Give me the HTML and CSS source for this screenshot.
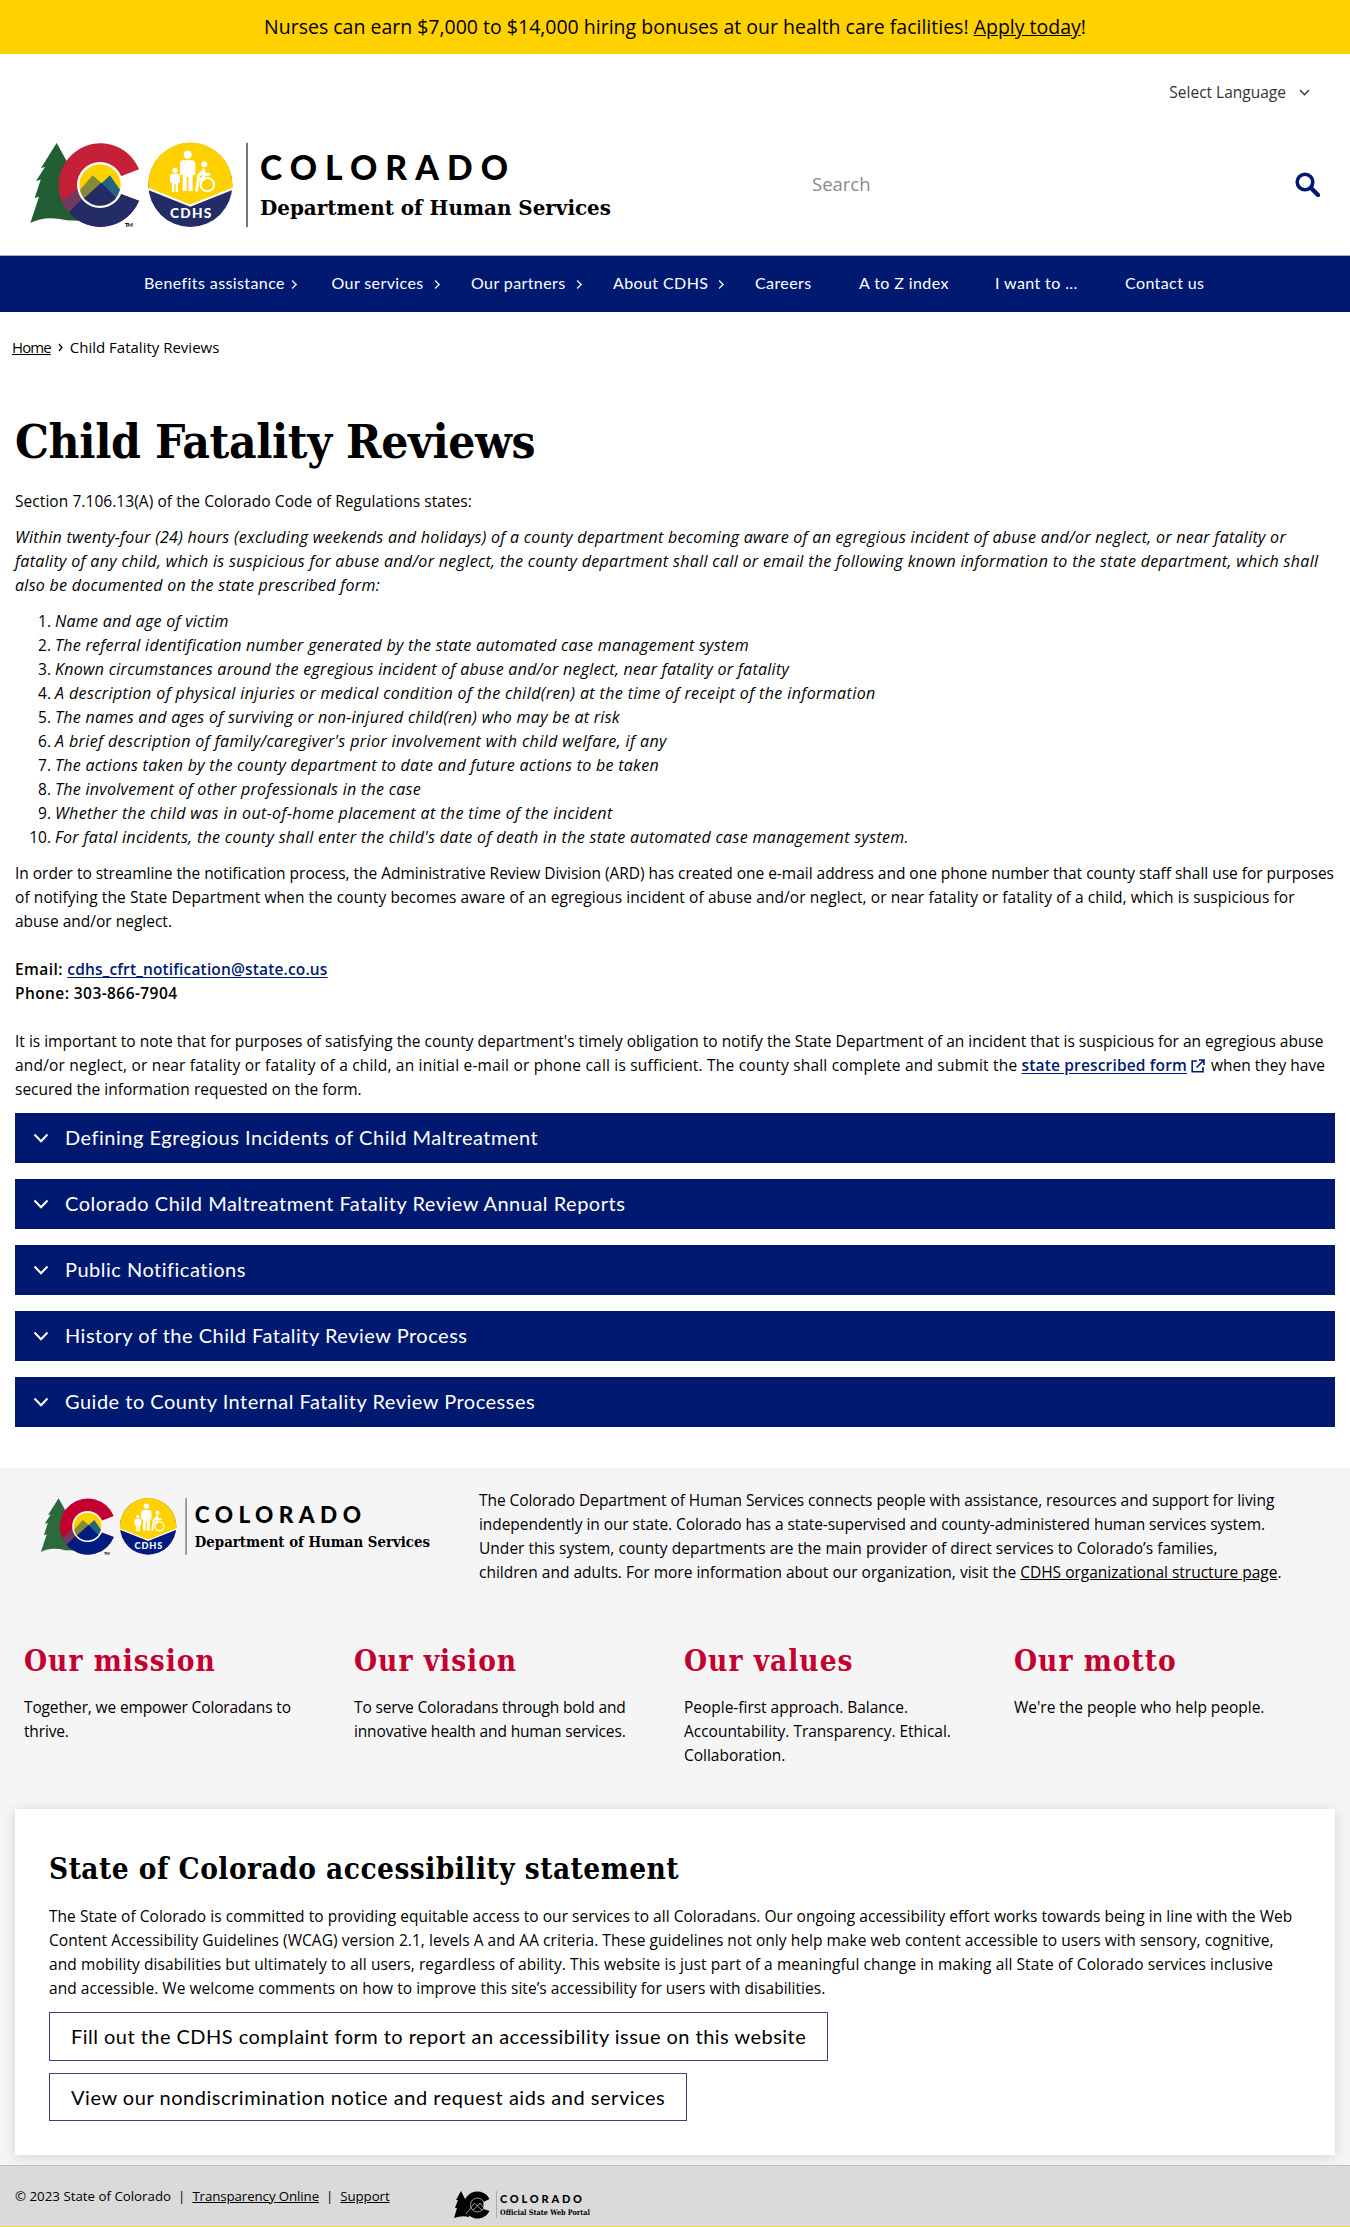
FILE: index.html
```html
<!DOCTYPE html>
<html lang="en">
<head>
<meta charset="utf-8">
<title>Child Fatality Reviews | Colorado Department of Human Services</title>
<link rel="stylesheet" href="styles.css">
</head>
<body>
<svg class="defs" aria-hidden="true">
  <symbol id="cdhs-logo" viewBox="0 0 1770 300">
    <path class="green" d="M95 24L48 99L60 96L33 138L47 134L29 189L42 185L16 264Q60 240 125 256L175 258L150 90L128 83Z"/>
    <path class="red" d="M342 103A125 125 0 1 0 342 197L288 177A66 66 0 1 1 288 124Z"/>
    <path class="navy" d="M342 197A125 125 0 0 1 131 232L180 180L190 200A66 66 0 0 0 288 177Z"/>
    <path class="plum" d="M110 200L162 160L182 181L131 232Q117 218 110 200Z"/>
    <circle cx="225" cy="150" r="69" fill="#fff"/>
    <circle class="yellow" cx="225" cy="150" r="62"/>
    <path class="olive" d="M165 164L203 121L232 146L182 196Q168 182 165 164Z"/>
    <path class="teal" d="M285 164L255 121L228 146L268 194Q280 182 285 164Z"/>
    <path class="navy" d="M177 190L229 143L274 188A62 62 0 0 1 177 190Z"/>
    <text x="299" y="276" class="sans" font-size="18" font-weight="700" textLength="25">TM</text>
    <circle class="navy" cx="496" cy="150" r="126"/>
    <path class="yellow" d="M370.5 160A126 126 0 1 1 621.5 160L496 213Z"/>
    <path d="M371 162L496 212L621 162" fill="none" stroke="#fff" stroke-width="6"/>
    <g fill="#fff" stroke="#fff" stroke-linecap="round">
      <circle cx="488" cy="59" r="12" stroke="none"/>
      <path d="M473 76H502Q511 77 511 88V119H503V168H490V126H485V168H473V119H465V88Q465 77 473 76Z" stroke="none"/>
      <circle cx="450" cy="106" r="8" stroke="none"/>
      <path d="M440 116H460Q466 118 465 126V143H459V171H452V147H448V171H441V143H435V126Q434 118 440 116Z" stroke="none"/>
      <circle cx="538" cy="88" r="9" stroke="none"/>
      <circle cx="547" cy="149" r="20" fill="none" stroke-width="6"/>
      <path d="M536 104V132H520L515 166M536 118H552M536 106L520 124" fill="none" stroke-width="9"/>
    </g>
    <text x="435" y="249" class="sans" font-size="41" font-weight="900" textLength="124" fill="#fff">CDHS</text>
    <path d="M666 23V277" stroke="#333" stroke-width="4"/>
    <text x="705" y="135" class="sans" font-size="101" font-weight="900" textLength="744">COLORADO</text>
    <text x="705" y="241" class="slab" font-size="63" font-weight="700" textLength="1053" lengthAdjust="spacingAndGlyphs">Department of Human Services</text>
  </symbol>
  <symbol id="chevron" viewBox="0 0 16 16"><path d="M1.5 4.5L8 11.2L14.5 4.5" fill="none" stroke="currentColor" stroke-width="2"/></symbol>
</svg>

<div class="alert">Nurses can earn $7,000 to $14,000 hiring bonuses at our health care facilities! <a href="#">Apply today</a>!</div>

<header class="masthead">
  <div class="language">Select Language <svg width="11" height="11"><use href="#chevron"/></svg></div>
  <div class="brand-row">
    <svg class="logo logo-header" width="590" height="100"><use href="#cdhs-logo"/></svg>
    <div class="search">
      <span>Search</span>
      <svg width="25" height="25" viewBox="0 0 25 25"><circle cx="10" cy="10" r="7.8" fill="none" stroke="#001970" stroke-width="3.6"/><path d="M16 16L23 23" stroke="#001970" stroke-width="4.4" stroke-linecap="round"/></svg>
    </div>
  </div>
</header>

<nav class="nav">
  <a class="sub" href="#">Benefits assistance</a>
  <a class="sub" href="#">Our services</a>
  <a class="sub" href="#">Our partners</a>
  <a class="sub" href="#">About CDHS</a>
  <a href="#">Careers</a>
  <a href="#">A to Z index</a>
  <a href="#">I want to ...</a>
  <a href="#">Contact us</a>
</nav>

<div class="breadcrumb"><a href="#">Home</a><svg width="7" height="9" viewBox="0 0 7 9"><path d="M2 1L5 4.5L2 8" fill="none" stroke="#000" stroke-width="1.3"/></svg><span>Child Fatality Reviews</span></div>

<main class="content">
  <h1>Child Fatality Reviews</h1>
  <p class="intro">Section 7.106.13(A) of the Colorado Code of Regulations states:</p>
  <p class="quote">Within twenty-four (24) hours (excluding weekends and holidays) of a county department becoming aware of an egregious incident of abuse and/or neglect, or near fatality or<br><span class="loose">fatality of any child, which is suspicious for abuse and/or neglect, the county department shall call or email the following known information to the state department, which shall</span><br>also be documented on the state prescribed form:</p>
  <ol class="quote-list">
    <li><em>Name and age of victim</em></li>
    <li><em>The referral identification number generated by the state automated case management system</em></li>
    <li><em>Known circumstances around the egregious incident of abuse and/or neglect, near fatality or fatality</em></li>
    <li><em class="looser">A description of physical injuries or medical condition of the child(ren) at the time of receipt of the information</em></li>
    <li><em>The names and ages of surviving or non-injured child(ren) who may be at risk</em></li>
    <li><em class="looser">A brief description of family/caregiver's prior involvement with child welfare, if any</em></li>
    <li><em>The actions taken by the county department to date and future actions to be taken</em></li>
    <li><em>The involvement of other professionals in the case</em></li>
    <li><em class="looser">Whether the child was in out-of-home placement at the time of the incident</em></li>
    <li><em class="loose">For fatal incidents, the county shall enter the child's date of death in the state automated case management system.</em></li>
  </ol>
  <p><span class="snug">In order to streamline the notification process, the Administrative Review Division (ARD) has created one e-mail address and one phone number that county staff shall use for purposes</span><br><span class="open">of notifying the State Department when the county becomes aware of an egregious incident of abuse and/or neglect, or near fatality or fatality of a child, which is suspicious for</span><br>abuse and/or neglect.<br><br><strong>Email: <a href="#">cdhs_cfrt_notification@state.co.us</a><br>Phone: 303-866-7904</strong><br><br>It is important to note that for purposes of satisfying the county department's timely obligation to notify the State Department of an incident that is suspicious for an egregious abuse<br><span class="wide">and/or neglect, or near fatality or fatality of a child, an initial e-mail or phone call is sufficient. The county shall complete and submit the </span><strong><a href="#">state prescribed form</a></strong><svg class="external" width="14" height="14" viewBox="0 0 14 14"><path d="M6 2H1.2V12.8H12V8M8 1H13V6M13 1L5.5 8.5" fill="none" stroke="#001970" stroke-width="1.6"/></svg> when they have<br>secured the information requested on the form.</p>
  <div class="accordion">
    <div class="panel"><svg width="16" height="16"><use href="#chevron"/></svg><span>Defining Egregious Incidents of Child Maltreatment</span></div>
    <div class="panel"><svg width="16" height="16"><use href="#chevron"/></svg><span>Colorado Child Maltreatment Fatality Review Annual Reports</span></div>
    <div class="panel"><svg width="16" height="16"><use href="#chevron"/></svg><span>Public Notifications</span></div>
    <div class="panel"><svg width="16" height="16"><use href="#chevron"/></svg><span>History of the Child Fatality Review Process</span></div>
    <div class="panel"><svg width="16" height="16"><use href="#chevron"/></svg><span>Guide to County Internal Fatality Review Processes</span></div>
  </div>
</main>

<section class="about">
  <div class="about-top">
    <svg class="logo logo-footer" width="396" height="67"><use href="#cdhs-logo"/></svg>
    <p>The Colorado Department of Human Services connects people with assistance, resources and support for living<br>independently in our state. Colorado has a state-supervised and county-administered human services system.<br><span class="loosest">Under this system, county departments are the main provider of direct services to Colorado’s families,</span><br><span class="level">children and adults. For more information about our organization, visit the <a href="#">CDHS organizational structure page</a>.</span></p>
  </div>
  <div class="values">
    <div><h2>Our mission</h2><p>Together, we empower Coloradans to<br>thrive.</p></div>
    <div><h2>Our vision</h2><p>To serve Coloradans through bold and<br>innovative health and human services.</p></div>
    <div><h2>Our values</h2><p class="level">People-first approach. Balance.<br>Accountability. Transparency. Ethical.<br>Collaboration.</p></div>
    <div><h2>Our motto</h2><p class="level">We're the people who help people.</p></div>
  </div>
  <div class="card">
    <h2>State of Colorado accessibility statement</h2>
    <p>The State of Colorado is committed to providing equitable access to our services to all Coloradans. Our ongoing accessibility effort works towards being in line with the Web<br>Content Accessibility Guidelines (WCAG) version 2.1, levels A and AA criteria. These guidelines not only help make web content accessible to users with sensory, cognitive,<br><span class="open">and mobility disabilities but ultimately to all users, regardless of ability. This website is just part of a meaningful change in making all State of Colorado services inclusive</span><br>and accessible. We welcome comments on how to improve this site’s accessibility for users with disabilities.</p>
    <a class="button" href="#">Fill out the CDHS complaint form to report an accessibility issue on this website</a>
    <a class="button notice" href="#">View our nondiscrimination notice and request aids and services</a>
  </div>
</section>

<footer class="bottom">
  <div class="legal"><span>© 2023 State of Colorado</span><span>|</span><a href="#">Transparency Online</a><span>|</span><a href="#">Support</a></div>
  <svg class="portal" width="140" height="30" viewBox="0 0 140 30">
    <path d="M7 1L2 10H4L1 18H3L0 28Q8 25 15 27V8L11 9Z"/>
    <path d="M35.5 9A13.5 13.5 0 1 0 35.5 21L29.5 19V12Z"/>
    <circle cx="23.5" cy="15" r="7" fill="none" stroke="#d9d9d9" stroke-width=".7"/>
    <path d="M12 24L20.5 13L23.5 16L26 13L30 18M19 20L23.5 16L28 20" fill="none" stroke="#d9d9d9" stroke-width=".7"/>
    <path d="M42.5 1V28" stroke="#999" stroke-width=".7"/>
    <text x="46" y="13" class="sans" font-size="11" font-weight="900" textLength="82">COLORADO</text>
    <text x="46" y="25" class="slab" font-size="7.5" font-weight="700" textLength="90" lengthAdjust="spacingAndGlyphs">Official State Web Portal</text>
  </svg>
</footer>
</body>
</html>
```
FILE: styles.css
```css
:root { --navy: #001970; }
* { box-sizing: border-box; }
body {
  margin: 0;
  background: #fff;
  color: #000;
  font: 15.5px/24px "Open Sans", sans-serif;
  white-space: nowrap;
}
a { color: inherit; text-underline-offset: 1px; }
p, h1, h2, ol { margin: 0; }
svg { display: block; flex: none; }
.defs { display: none; }

.sans { font-family: Lato, sans-serif; }
.slab { font-family: "DejaVu Serif", serif; font-stretch: condensed; }
.green { fill: var(--l-green); }
.red { fill: var(--l-red); }
.navy { fill: var(--l-navy); }
.yellow { fill: #ffd100; }
.plum { fill: #6f3a5e; }
.olive { fill: #85893a; }
.teal { fill: #246386; }
.logo-header { --l-green: #215e33; --l-red: #c61f38; --l-navy: #242c68; }
.logo-footer { --l-green: #2b6a3d; --l-red: #c3002f; --l-navy: #001c80; }

.alert {
  height: 54px;
  background: #ffd100;
  font-size: 19.5px;
  line-height: 54px;
  text-align: center;
}

.masthead { height: 202px; border-bottom: 1px solid #a5aacb; }
.language {
  display: flex;
  justify-content: flex-end;
  align-items: center;
  gap: 13px;
  padding: 26px 40px 0 0;
  color: #333;
}
.brand-row { display: flex; padding: 31px 30px 0 25px; }
.search {
  flex: 1;
  display: flex;
  justify-content: space-between;
  align-items: center;
  height: 98px;
  padding-left: 197px;
  color: #8a8a8a;
  font-size: 18.5px;
}

.nav {
  display: grid;
  grid-template-columns: 187.5px 139.5px 142px 142px 104px 136px 130px auto;
  align-items: center;
  height: 56px;
  padding: 0 0 2px 144px;
  background: var(--navy);
  color: #fff;
  font: 16px/20px Lato, sans-serif;
  letter-spacing: .4px;
}
.nav a {
  display: flex;
  justify-content: space-between;
  align-items: center;
  padding-right: 32px;
  color: #fff;
  text-decoration: none;
}
.nav .sub::after {
  content: "";
  width: 6px;
  height: 6px;
  margin-top: 2px;
  border: solid #fff;
  border-width: 1.5px 1.5px 0 0;
  outline: 0;
  transform: rotate(45deg) scale(.9);
  box-shadow: inset -.5px .5px 0 #fff;
}
.nav .sub:first-child { padding-right: 36px; }

.breadcrumb {
  display: flex;
  align-items: center;
  gap: 6px;
  padding: 23px 0 0 12px;
  font-size: 15px;
}
.breadcrumb a { letter-spacing: -.9px; }

.content { padding: 54px 15px 41px; }
h1, h2 {
  font-family: "DejaVu Serif", serif;
  font-stretch: condensed;
  font-weight: 700;
}
h1 { font-size: 47.5px; line-height: 57px; letter-spacing: -.4px; margin-bottom: 19px; }
h2 { font-size: 29.5px; line-height: 36px; }
.content p { margin-bottom: 12px; }
.quote, em { font-size: 16px; font-style: italic; letter-spacing: .28px; }
.quote-list { margin-bottom: 12px; padding-left: 40px; }
.quote-list li { height: 24px; }
strong { font-weight: 600; letter-spacing: .42px; }
strong a { color: var(--navy); letter-spacing: .16px; text-underline-offset: 2px; }
.external { display: inline-block; margin: 0 2px 0 4px; vertical-align: -2px; }

/* tracking steps for individual lines of running text */
.intro { letter-spacing: .06px; }
.snug { letter-spacing: -.02px; }
.level { letter-spacing: 0; }
.loosest { letter-spacing: .03px; }
.open { letter-spacing: .09px; }
.wide { letter-spacing: .2px; }
.loose { letter-spacing: .33px; }
.looser { letter-spacing: .39px; }

.accordion { display: grid; gap: 16px; }
.panel {
  display: flex;
  align-items: center;
  gap: 16px;
  height: 50px;
  padding-left: 18px;
  background: var(--navy);
  color: #fff;
  font: 20px/24px Lato, sans-serif;
  letter-spacing: .5px;
}
.panel span { padding-bottom: 2px; }

.about { height: 697px; padding: 20px 15px 0; background: #f5f5f5; }
.about-top { display: flex; height: 155px; padding-left: 22px; }
.about-top p { padding-left: 46px; letter-spacing: -.06px; }
.about-top .level { letter-spacing: 0; }
.about-top svg { margin-top: 5px; }
.values {
  display: grid;
  grid-template-columns: repeat(4, 330px);
  height: 166px;
  padding-left: 9px;
}
.values h2 { margin-bottom: 16px; color: #c3002f; letter-spacing: 1px; }
.values p { letter-spacing: -.15px; }
.values .level { letter-spacing: -.02px; }
.card {
  height: 346px;
  padding: 42px 34px 0;
  background: #fff;
  box-shadow: 0 2px 12px rgba(0, 0, 0, .14);
}
.card h2 { letter-spacing: .47px; margin-bottom: 17px; }
.card p { margin-bottom: 12px; letter-spacing: .04px; }
.button {
  display: block;
  width: max-content;
  height: 48.5px;
  margin-bottom: 12px;
  padding: 0 21px;
  border: 1px solid #3a4280;
  font: 20px/46px Lato, sans-serif;
  letter-spacing: .47px;
  text-decoration: none;
}
.notice { letter-spacing: .53px; }

.bottom {
  display: flex;
  height: 62px;
  padding-left: 15px;
  border-top: 1px solid #c0c0c0;
  border-bottom: 1px solid #f0dc40;
  background: #dadada;
}
.legal {
  display: flex;
  gap: 7px;
  width: 439px;
  padding-top: 18px;
  font-size: 13.3px;
}
.legal a { letter-spacing: -.1px; }
.portal { margin-top: 24px; }
```
